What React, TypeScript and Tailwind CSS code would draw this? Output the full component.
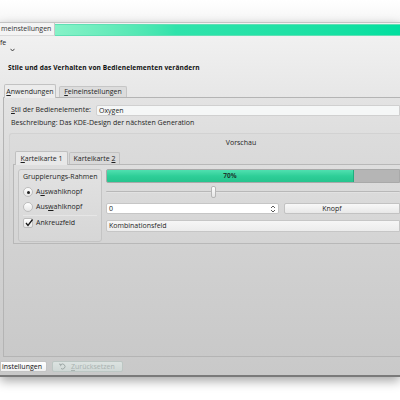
import React from "react";

const U = ({ children }: { children: React.ReactNode }) => (
  <span className="underline underline-offset-1">{children}</span>
);

export default function App() {
  return (
    <div className="w-[400px] h-[400px] bg-white overflow-hidden font-['Open_Sans',sans-serif] text-[7px] leading-[8px] text-[#1e1e1e] flex flex-col">
      <div className="h-[22px] shrink-0 bg-gradient-to-b from-white to-[#f6f6f6]" />
      {/* window */}
      <div className="shrink-0 flex flex-col border-t border-[#c4c4c4] border-b-2 border-b-[#7a7a7a] bg-gradient-to-b from-[#f3f3f3] via-[#d6d6d6] via-50% to-[#c9c9c9] shadow-[0_4px_10px_rgba(0,0,0,0.35)]">
        {/* title row */}
        <div className="h-[13px] flex items-stretch shrink-0">
          <div className="w-[55px] bg-[#f4f4f4] border-r border-[#c8c8c8] border-b border-b-[#dadada] flex items-center pl-[1px] text-[#333]">
            meinstellungen
          </div>
          <div className="flex-1 mt-[1px] bg-gradient-to-r from-[#86f2c8] via-[#2fe3ab] via-35% to-[#00df9f] border-y border-[#5fe0b4]" />
        </div>
        {/* menu remnant */}
        <div className="h-[22px] shrink-0 relative">
          <span className="absolute left-0 top-[3px]">fe</span>
          <svg className="absolute left-[10px] top-[12px]" width="5" height="4" viewBox="0 0 5 4">
            <path d="M0.5 0.8 L2.5 3 L4.5 0.8" fill="none" stroke="#333" strokeWidth="0.9" />
          </svg>
        </div>
        {/* heading */}
        <div className="h-[25px] shrink-0 pl-[8px] pt-[6px] font-bold text-[6.6px] tracking-[0.1px] text-[#111]">
          Stile und das Verhalten von Bedienelementen verändern
        </div>
        {/* tabs */}
        <div className="h-[12px] shrink-0 flex items-end pl-[4px] gap-[3px] mt-[2px]">
          <div className="h-[14px] w-[52px] bg-[#ececec] border border-b-0 border-[#c2c2c2] rounded-t-[2px] flex items-center justify-center relative top-[1px]">
            <span><U>A</U>nwendungen</span>
          </div>
          <div className="h-[11px] w-[68px] bg-[#dcdcdc] border border-b-0 border-[#c6c6c6] rounded-t-[2px] flex items-center justify-center">
            <span><U>F</U>eineinstellungen</span>
          </div>
        </div>
        {/* tab panel */}
        <div className="ml-[3px] h-[260px] shrink-0 border border-r-0 border-[#b4b4b4] rounded-tl-[1px] flex flex-col bg-gradient-to-b from-[#e3e3e3] via-[#d4d4d4] via-45% to-[#c9c9c9]">
          <div className="h-[18px] flex items-end shrink-0">
            <span className="pl-[7px] w-[92px] pb-[2px]"><U>S</U>til der Bedienelemente:</span>
            <div className="flex-1 h-[11px] bg-[#f5f7f7] border border-[#d0d0d0] rounded-l-[2px] flex items-center pl-[2px]">Oxygen</div>
          </div>
          <div className="h-[15px] shrink-0 pl-[7px] pt-[3px]">Beschreibung: Das KDE-Design der nächsten Generation</div>
          {/* Vorschau group */}
          <div className="ml-[5px] mt-[2px] h-[114px] shrink-0 border border-r-0 border-[#d2d2d2] rounded-tl-[3px] bg-gradient-to-b from-[#dcdcdc] to-[#d2d2d2] flex flex-col">
            <div className="h-[16px] shrink-0 flex items-center justify-center pl-[72px] pt-[1px]">Vorschau</div>
            {/* inner tabs */}
            <div className="h-[14px] shrink-0 flex items-end pl-[5px] gap-[1px]">
              <div className="h-[14px] w-[53px] bg-[#e8e8e8] border border-b-0 border-[#c0c0c0] rounded-t-[2px] flex items-center justify-center relative top-[1px]">
                <span><U>K</U>arteikarte 1</span>
              </div>
              <div className="h-[12px] w-[51px] bg-[#d9d9d9] border border-b-0 border-[#c2c2c2] rounded-t-[2px] flex items-center justify-center">
                <span>Karteikarte <U>2</U></span>
              </div>
            </div>
            <div className="ml-[3px] h-[80px] shrink-0 border border-r-0 border-[#b8b8b8] bg-gradient-to-b from-[#dedede] to-[#d4d4d4] flex gap-[4px] pl-[4px]">
              {/* group box */}
              <div className="w-[84px] mt-[4px] h-[73px] border border-[#c4c4c4] rounded-[3px] bg-gradient-to-b from-[#e2e2e2] to-[#d6d6d6] flex flex-col pl-[4px]">
                <div className="h-[14px] pt-[3px] shrink-0">Gruppierungs-Rahmen</div>
                <div className="h-[16px] flex items-center gap-[3px] shrink-0">
                  <div className="w-[10px] h-[10px] rounded-full bg-gradient-to-b from-white to-[#e6e6e6] border border-[#bdbdbd] flex items-center justify-center">
                    <div className="w-[3px] h-[3px] rounded-full bg-[#222]" />
                  </div>
                  <span>A<U>u</U>swahlknopf</span>
                </div>
                <div className="h-[13px] flex items-center gap-[3px] shrink-0">
                  <div className="w-[10px] h-[10px] rounded-full bg-gradient-to-b from-white to-[#e6e6e6] border border-[#bdbdbd]" />
                  <span>Aus<U>w</U>ahlknopf</span>
                </div>
                <div className="h-[1px] mr-[4px] mt-[2px] bg-[#c8c8c8] shrink-0 border-b border-b-[#e6e6e6]" />
                <div className="h-[14px] flex items-center gap-[3px] shrink-0">
                  <div className="w-[10px] h-[10px] rounded-[2px] bg-gradient-to-b from-white to-[#e6e6e6] border border-[#bdbdbd] relative">
                    <svg className="absolute left-[0px] top-[-1px]" width="10" height="10" viewBox="0 0 10 10">
                      <path d="M2 5 L4 7.5 L8.5 1.5" fill="none" stroke="#1a1a1a" strokeWidth="1.3" />
                    </svg>
                  </div>
                  <span>Ankreuzfeld</span>
                </div>
              </div>
              {/* right column */}
              <div className="flex-1 flex flex-col pt-[4px]">
                <div className="h-[14px] shrink-0 flex bg-[#b5b5b5] border border-[#a9a9a9] rounded-l-[2px] overflow-hidden">
                  <div className="w-[247px] bg-gradient-to-b from-[#4fe0b0] via-[#2ecf98] to-[#26c48e] border-r border-[#1fae7e] flex items-center justify-center text-[#1d3b30] font-bold text-[6.5px]">70%</div>
                  <div className="flex-1" />
                </div>
                <div className="h-[20px] shrink-0 relative">
                  <div className="absolute left-0 right-0 top-[8px] h-[2px] bg-[#b8b8b8] border-b border-[#e2e2e2] rounded-[1px]" />
                  <div className="absolute left-[105px] top-[3px] w-[5px] h-[12px] rounded-[2px] bg-gradient-to-b from-white to-[#e4e4e4] border border-[#b6b6b6]" />
                </div>
                <div className="h-[11px] shrink-0 flex gap-[5px]">
                  <div className="w-[173px] bg-white border border-[#c6c6c6] rounded-[2px] flex items-center pl-[2px] relative">
                    0
                    <svg className="absolute right-[2px] top-[1px]" width="6" height="8" viewBox="0 0 6 8">
                      <path d="M1 3 L3 1 L5 3 M1 5 L3 7 L5 5" fill="none" stroke="#333" strokeWidth="0.8" />
                    </svg>
                  </div>
                  <div className="flex-1 bg-gradient-to-b from-[#f8f8f8] to-[#e8e8e8] border border-[#c2c2c2] rounded-l-[2px] flex items-center justify-center pr-[20px] text-[7px]">Knopf</div>
                </div>
                <div className="h-[12px] mt-[6px] shrink-0 bg-gradient-to-b from-[#f6f6f6] to-[#ececec] border border-[#c6c6c6] rounded-l-[2px] flex items-center pl-[2px]">Kombinationsfeld</div>
              </div>
            </div>
          </div>
          <div className="flex-1" />
        </div>
        {/* bottom buttons */}
        <div className="h-[18px] shrink-0 flex items-start pt-[4px] gap-[5px]">
          <div className="w-[47px] h-[11px] bg-gradient-to-b from-white to-[#f0f0f0] border border-[#c4c4c4] rounded-r-[2px] flex items-center pl-[1px] text-[#111]">instellungen</div>
          <div className="w-[71px] h-[11px] bg-gradient-to-b from-[#dce3e1] to-[#d0d8d6] border border-[#bcc6c3] rounded-[2px] flex items-center gap-[4px] pl-[5px] text-[#a9b2b0]">
            <svg width="9" height="7" viewBox="0 0 9 7">
              <path d="M3 1.5 A2.5 2.5 0 1 1 3 5.5 M3 1.5 L1 1 M3 1.5 L2.5 3.2" fill="none" stroke="#9aa4a2" strokeWidth="0.9" />
            </svg>
            <span><U>Z</U>urücksetzen</span>
          </div>
        </div>
      </div>
      <div className="flex-1" />
    </div>
  );
}
